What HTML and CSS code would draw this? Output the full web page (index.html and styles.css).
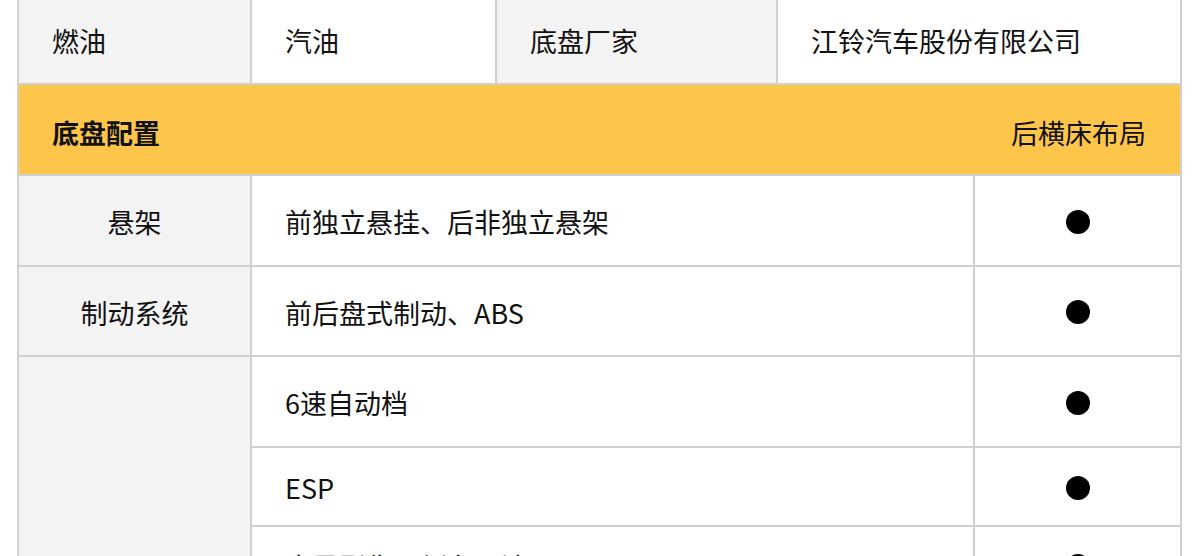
FILE: index.html
```html
<!DOCTYPE html>
<html lang="zh-CN">
<head>
<meta charset="utf-8">
<title>车型配置</title>
<link rel="stylesheet" href="styles.css">
</head>
<body>
<div class="sheet">
  <div class="info-row">
    <div class="cell label">燃油</div>
    <div class="cell">汽油</div>
    <div class="cell label">底盘厂家</div>
    <div class="cell last">江铃汽车股份有限公司</div>
  </div>
  <div class="section-head">
    <span class="section-title">底盘配置</span>
    <span class="section-note">后横床布局</span>
  </div>
  <div class="spec-grid">
    <div class="cell label center r-tall">悬架</div>
    <div class="cell r-tall">前独立悬挂、后非独立悬架</div>
    <div class="cell center last r-tall"><span class="dot"></span></div>

    <div class="cell label center r-mid">制动系统</div>
    <div class="cell r-mid">前后盘式制动、ABS</div>
    <div class="cell center last r-mid"><span class="dot"></span></div>

    <div class="cell label center merged"></div>
    <div class="cell r-tall">6速自动档</div>
    <div class="cell center last r-tall"><span class="dot"></span></div>

    <div class="cell r-short">ESP</div>
    <div class="cell center last r-short"><span class="dot"></span></div>

    <div class="cell r-tall">全景影像、倒车雷达</div>
    <div class="cell center last r-tall"><span class="dot"></span></div>
  </div>
</div>
</body>
</html>
```

FILE: styles.css
```css
* {
  box-sizing: border-box;
}

html, body {
  margin: 0;
  padding: 0;
  background: #ffffff;
}

body {
  font-family: "Noto Sans CJK SC", "Noto Sans", sans-serif;
  font-size: 27px;
  color: #111111;
  overflow: hidden;
  height: 556px;
}

.sheet {
  margin-left: 17px;
  width: 1165px;
  border-left: 2px solid #d0d0d0;
  border-right: 2px solid #d0d0d0;
}

.cell {
  display: flex;
  align-items: center;
  padding: 0 32px 0 33px;
  border-right: 2px solid #d0d0d0;
  border-bottom: 2px solid #d0d0d0;
  background: #ffffff;
  white-space: nowrap;
}

.cell.last {
  border-right: none;
}

.cell.label {
  background: #f3f3f3;
}

.cell.center {
  justify-content: center;
  padding: 0;
}

.info-row {
  display: grid;
  grid-template-columns: 233px 245px 281px 1fr;
  height: 85px;
}

.info-row .cell {
  padding-bottom: 3px;
}

.section-head {
  display: flex;
  align-items: center;
  justify-content: space-between;
  height: 91px;
  padding: 5px 34px 0 33px;
  background: #fec54b;
  border-bottom: 2px solid #d0d0d0;
}

.section-title {
  font-weight: 700;
}

.spec-grid {
  display: grid;
  grid-template-columns: 233px 723px 1fr;
  grid-template-rows: 91px 90px 91px 79px 78px;
}

.merged {
  grid-row: 3 / span 3;
  grid-column: 1;
}

.spec-grid .cell {
  padding-top: 2px;
}

.dot {
  display: block;
  width: 24px;
  height: 24px;
  border-radius: 50%;
  background: #000000;
}
```
